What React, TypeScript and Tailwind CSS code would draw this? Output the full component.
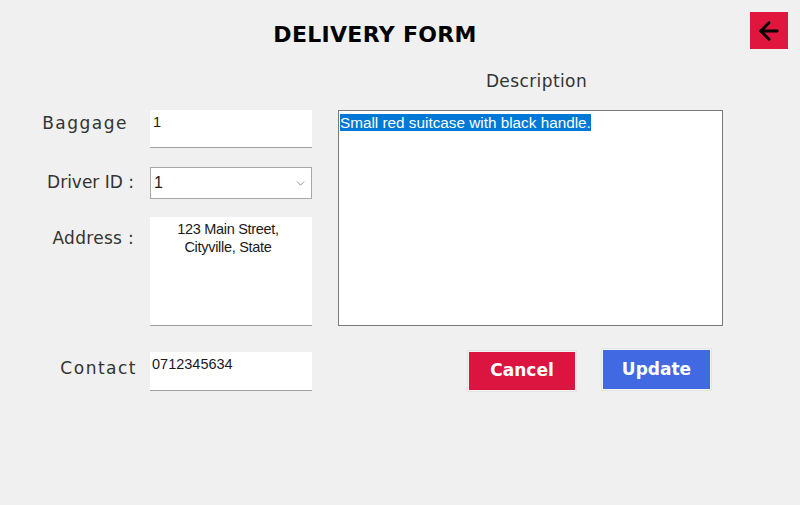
import { ArrowLeft, ChevronDown } from "lucide-react";

const labelFont = "font-['Century_Gothic','DejaVu_Sans',sans-serif]";
const boxFont = "font-['Liberation_Sans',Arial,sans-serif]";

export default function App() {
  return (
    <div className="w-[800px] h-[505px] bg-[#f0f0f0] flex flex-col text-[#1a1a1a]">
      {/* Header */}
      <div className="flex items-start h-[60px] pt-[12px]">
        <div className="flex-1 flex justify-center pt-[6px]">
          <h1 className={`${labelFont} text-[22px] font-bold tracking-[0.3px] text-black`}>
            DELIVERY FORM
          </h1>
        </div>
        <button className="w-[38px] h-[37px] mr-[12px] bg-[#e1163f] flex items-center justify-center">
          <ArrowLeft className="w-[28px] h-[28px] text-black" strokeWidth={2.5} />
        </button>
      </div>

      {/* Body */}
      <div className="flex">
        {/* Left column */}
        <div className="w-[338px] pt-[50px] flex flex-col">
          <div className="flex h-[38px]">
            <label className={`${labelFont} w-[150px] pr-[22px] pt-[1px] text-right text-[17px] tracking-[1.5px] text-[#333]`}>
              Baggage
            </label>
            <div className={`${boxFont} w-[162px] h-[38px] bg-white border-b border-[#a0a0a0] text-[14.5px] px-[3px] pt-[2px]`}>
              1
            </div>
          </div>

          <div className="flex h-[32px] mt-[19px]">
            <label className={`${labelFont} w-[150px] pr-[16px] pt-[3px] text-right text-[17px] text-[#333]`}>
              Driver ID :
            </label>
            <div className={`${boxFont} w-[162px] h-[32px] bg-white border border-[#a8a8a8] flex items-center justify-between px-[3px] text-[16px]`}>
              <span>1</span>
              <ChevronDown className="w-[13px] h-[13px] text-[#777] mr-[1px]" strokeWidth={1.5} />
            </div>
          </div>

          <div className="flex h-[109px] mt-[18px]">
            <label className={`${labelFont} w-[150px] pr-[16px] pt-[9px] text-right text-[17px] tracking-[0.3px] text-[#333]`}>
              Address :
            </label>
            <div className={`${boxFont} w-[162px] h-[109px] bg-white border-b border-[#a0a0a0] text-[14.5px] leading-[18px] text-center pt-[3px] pr-[6px] tracking-[-0.3px]`}>
              123 Main Street,
              <br />
              Cityville, State
            </div>
          </div>

          <div className="flex h-[39px] mt-[26px]">
            <label className={`${labelFont} w-[150px] pr-[13px] pt-[4px] text-right text-[17px] tracking-[1.5px] text-[#333]`}>
              Contact
            </label>
            <div className={`${boxFont} w-[162px] h-[39px] bg-white border-b border-[#a0a0a0] text-[14.5px] px-[2px] pt-[2px]`}>
              0712345634
            </div>
          </div>
        </div>

        {/* Right column */}
        <div className="w-[385px] flex flex-col">
          <div className={`${labelFont} text-[17px] tracking-[0.4px] text-[#333] text-center pl-[12px] h-[50px] pt-[9px]`}>
            Description
          </div>
          <div className={`${boxFont} h-[216px] bg-white border border-[#7a7a7a] px-[1px] pt-[3px] text-[15.3px] leading-[17px]`}>
            <span className="bg-[#0078d7] text-white">Small red suitcase with black handle.</span>
          </div>

          <div className="flex justify-end gap-[24px] mt-[22px] pr-[11px]">
            <button className="mt-[2px] w-[110px] h-[42px] border border-[#e4e4e4] bg-[#f4f4f4] p-[1px]">
              <span className={`${labelFont} w-full h-full bg-[#dc1440] text-white text-[17px] font-bold flex items-center justify-center`}>
                Cancel
              </span>
            </button>
            <button className="w-[111px] h-[43px] border border-[#e4e4e4] bg-[#f4f4f4] p-[1px]">
              <span className={`${labelFont} w-full h-full bg-[#4169e1] text-white text-[17px] font-bold flex items-center justify-center`}>
                Update
              </span>
            </button>
          </div>
        </div>
      </div>
    </div>
  );
}
